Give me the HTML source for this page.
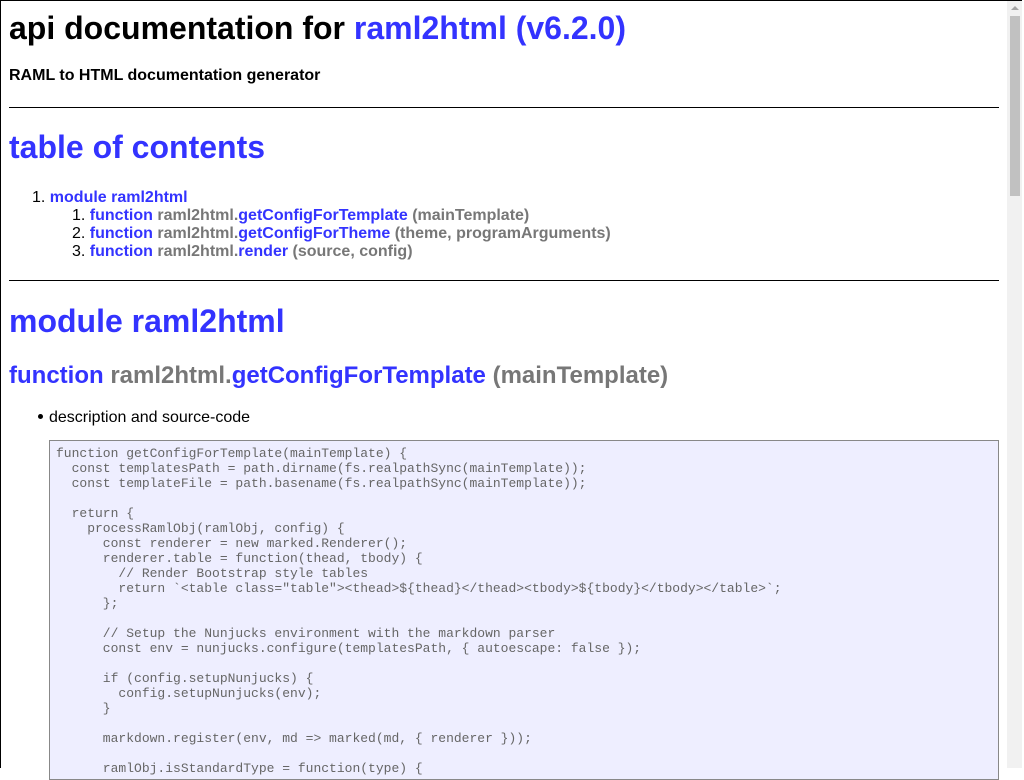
<!DOCTYPE html>
<html><head><meta charset="utf-8"><style>
html,body{margin:0;padding:0;width:1024px;height:768px;overflow:hidden;background:#fff}
#frame{position:absolute;left:0;top:0;width:1022px;height:768px;border-left:1px solid #000;border-top:1px solid #000;border-right:1px solid #000;box-sizing:border-box}
.a{position:absolute;font-family:"Liberation Sans",sans-serif;white-space:nowrap;margin:0}
.b{color:#3333ff}.g{color:#777}
.n{font-weight:normal;color:#000}
h1.a{font-size:32px;font-weight:bold;line-height:37px}
hr.r{position:absolute;left:9px;width:990px;height:0;border:0;border-top:1px solid #000;margin:0}
.li{font-size:16px;font-weight:bold;line-height:18px}
pre{position:absolute;left:49px;top:440px;width:950px;height:340px;box-sizing:border-box;margin:0;background:#eeeeff;border:1px solid #888;padding:5px 6px;font-family:"Liberation Mono",monospace;font-size:13px;line-height:15px;color:#666}
#sb{position:absolute;left:1007px;top:1px;width:15px;height:767px;background:#f1f1f1}
#th{position:absolute;left:1010px;top:16px;width:10px;height:180px;background:#c1c1c1}
#ar{position:absolute;left:1010px;top:6px;width:0;height:0;border-left:4px solid transparent;border-right:4px solid transparent;border-bottom:4px solid #a3a3a3;margin-left:1px}
#dot{position:absolute;left:38px;top:414px;width:5px;height:5px;border-radius:50%;background:#000}
</style></head><body>
<div id="frame"></div>
<h1 class="a" style="left:9px;top:10px">api documentation for <span class="b">raml2html (v6.2.0)</span></h1>
<div class="a" style="left:9px;top:67px;font-size:16px;font-weight:bold">RAML to HTML documentation generator</div>
<hr class="r" style="top:107px">
<h1 class="a b" style="left:9px;top:129px">table of contents</h1>
<div class="a li" style="left:32px;top:189px"><span class="n">1.</span> <span class="b">module raml2html</span></div>
<div class="a li" style="left:72px;top:207px"><span class="n">1.</span> <span class="b">function</span> <span class="g">raml2html.</span><span class="b">getConfigForTemplate</span> <span class="g">(mainTemplate)</span></div>
<div class="a li" style="left:72px;top:225px"><span class="n">2.</span> <span class="b">function</span> <span class="g">raml2html.</span><span class="b">getConfigForTheme</span> <span class="g">(theme, programArguments)</span></div>
<div class="a li" style="left:72px;top:243px"><span class="n">3.</span> <span class="b">function</span> <span class="g">raml2html.</span><span class="b">render</span> <span class="g">(source, config)</span></div>
<hr class="r" style="top:280px">
<h1 class="a b" style="left:9px;top:303px">module raml2html</h1>
<div class="a" style="left:9px;top:362px;font-size:24px;font-weight:bold;line-height:28px"><span class="b">function</span> <span class="g">raml2html.</span><span class="b">getConfigForTemplate</span> <span class="g">(mainTemplate)</span></div>
<div id="dot"></div>
<div class="a" style="left:49px;top:409px;font-size:16px;line-height:18px">description and source-code</div>
<pre>function getConfigForTemplate(mainTemplate) {
  const templatesPath = path.dirname(fs.realpathSync(mainTemplate));
  const templateFile = path.basename(fs.realpathSync(mainTemplate));

  return {
    processRamlObj(ramlObj, config) {
      const renderer = new marked.Renderer();
      renderer.table = function(thead, tbody) {
        // Render Bootstrap style tables
        return `&lt;table class="table"&gt;&lt;thead&gt;${thead}&lt;/thead&gt;&lt;tbody&gt;${tbody}&lt;/tbody&gt;&lt;/table&gt;`;
      };

      // Setup the Nunjucks environment with the markdown parser
      const env = nunjucks.configure(templatesPath, { autoescape: false });

      if (config.setupNunjucks) {
        config.setupNunjucks(env);
      }

      markdown.register(env, md =&gt; marked(md, { renderer }));

      ramlObj.isStandardType = function(type) {</pre>
<div id="sb"></div><div id="ar"></div><div id="th"></div>
</body></html>
